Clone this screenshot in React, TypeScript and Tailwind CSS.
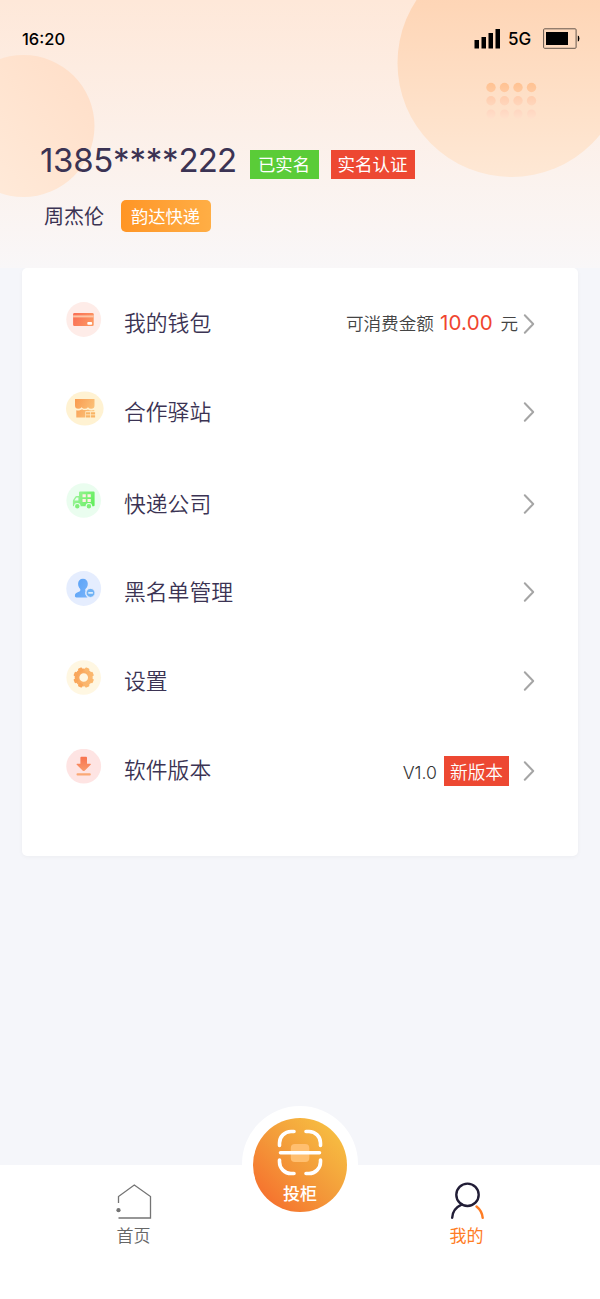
import type { ReactNode } from "react";

type MenuItem = {
  label: string;
  icon: ReactNode;
  spacing: string;
  chevron?: string;
  extra?: ReactNode;
};

function Gradient({ id, from, to }: { id: string; from: string; to: string }) {
  return (
    <defs>
      <linearGradient id={id} gradientUnits="userSpaceOnUse" x1="8" y1="12" x2="28" y2="22">
        <stop offset="0" stopColor={from} />
        <stop offset="1" stopColor={to} />
      </linearGradient>
    </defs>
  );
}

function WalletIcon() {
  return (
    <svg className="block h-[36px] w-[38px]" viewBox="0 0 38 36">
      <Gradient id="wallet" from="#fa7056" to="#fc9a63" />
      <circle cx="17.7" cy="17.5" r="17.4" fill="#feece8" />
      <rect x="7.1" y="11" width="20.6" height="13" rx="1.3" fill="url(#wallet)" />
      <rect x="7.1" y="13.4" width="20.6" height="2" fill="#fdc5a6" />
      <rect x="21.3" y="20" width="4.8" height="2.7" rx="0.9" fill="#fff" />
    </svg>
  );
}

function StoreIcon() {
  return (
    <svg className="block h-[36px] w-[38px]" viewBox="0 0 38 36">
      <Gradient id="store" from="#f99c51" to="#fbc57c" />
      <ellipse cx="18.8" cy="17.5" rx="18.8" ry="17.1" fill="#fff2d2" />
      <path
        d="M9 8h19.500v6.500q0 3.300-3.300 3.300-2 0-3.200-1.500-1.300 1.500-3.200 1.500t-3.200-1.500q-1.300 1.500-3.300 1.500Q9 17.800 9 14.500z"
        fill="url(#store)"
      />
      <path d="M10.300 19.200q1.800.7 3.500 0 1.600-.5 2.200-1 2.700 1.700 6 .2 2.300 1.600 6.300.6v1.200H19.400v6.300h-9.100z" fill="url(#store)" />
      <path d="M20 21.200h4.200v2.400H20zM24.900 21.200h4.200v2.400h-4.200zM20 24.200h4.200v2.300H20zM24.900 24.200h4.200v2.300h-4.200z" fill="#f9b465" />
    </svg>
  );
}

function TruckIcon() {
  return (
    <svg className="block h-[36px] w-[38px]" viewBox="0 0 38 36">
      <Gradient id="truck" from="#9df49b" to="#61ee5a" />
      <circle cx="17.7" cy="17.500" r="17.3" fill="#eafdef" />
      <path
        fillRule="evenodd"
        d="M14 8.500h13.600q1 0 1 1v12.800q0 1-1 1H7.700q-.8 0-.8-.8V18q0-.7.4-1.300l1.800-2.700q.6-.9 1.500-.9H13V9.500q0-1 1-1zM11 14.400q-.5 0-.8.4l-1.700 2.800h3.900v-3.200z"
        fill="url(#truck)"
      />
      <path d="M16.500 11.200h3.300v3h-3.300zM21.500 11.200h3.300v3h-3.300zM16.500 15.900h3.300v3h-3.300zM21.500 15.900h3.300v3h-3.300z" fill="#fff0e6" />
      <g fill="#80ef79" stroke="#eafdef" strokeWidth="1.100">
        <circle cx="11.300" cy="23.300" r="2.800" />
        <circle cx="22.900" cy="23.300" r="2.800" />
      </g>
    </svg>
  );
}

function BlockedUserIcon() {
  return (
    <svg className="block h-[36px] w-[38px]" viewBox="0 0 38 36">
      <Gradient id="user" from="#5aa2f6" to="#7cb6fb" />
      <circle cx="17.700" cy="17.500" r="17.400" fill="#e5edfe" />
      <path
        d="M17 7.700c-3 0-4.900 2-4.900 5.100 0 2.400.9 4.200 2.100 5.100.5 1.600-.1 2.400-1.900 3.100-2.500.9-3.400 1.800-3.400 4.100 0 .9.500 1.300 1.500 1.300h11.100a5.800 5.800 0 0 1-1.900-6.400c-.5-.6-.5-1.400-.1-2.100 1.400-1 2.300-2.800 2.300-5.100 0-3.100-1.800-5.100-4.800-5.100z"
        fill="url(#user)"
      />
      <circle cx="24.500" cy="21.900" r="4.500" fill="#71b3f5" stroke="#e5edfe" strokeWidth="1" />
      <path d="M22.300 21.900h4.600" stroke="#fff" strokeWidth="1.300" />
    </svg>
  );
}

function GearIcon() {
  return (
    <svg className="block h-[36px] w-[38px]" viewBox="0 0 38 36">
      <Gradient id="gear" from="#f9a156" to="#fbc07a" />
      <circle cx="17.700" cy="17.500" r="17.300" fill="#fff7e2" />
      <circle cx="17.700" cy="17.500" r="6.700" fill="none" stroke="url(#gear)" strokeWidth="4.700" />
      {[22.5, 67.5, 112.5, 157.5, 202.5, 247.5, 292.5, 337.5].map((angle) => (
        <rect key={angle} x="15.500" y="7.200" width="4.400" height="4" rx="1" fill={angle < 180 ? "#fbb76d" : "#f9a75b"} transform={`rotate(${angle} 17.7 17.5)`} />
      ))}
    </svg>
  );
}

function DownloadIcon() {
  return (
    <svg className="block h-[36px] w-[38px]" viewBox="0 0 38 36">
      <defs>
        <linearGradient id="download" x1="0" y1="0" x2="0" y2="1">
          <stop offset="0" stopColor="#f8734f" />
          <stop offset="1" stopColor="#f99a6b" />
        </linearGradient>
      </defs>
      <circle cx="17.700" cy="17.200" r="17.400" fill="#fee4e3" />
      <path
        d="M15.300 7.800h4.800q.9 0 .9.900v6h3.200q1.300 0 .4 1l-6 6q-.9.800-1.800 0l-6-6q-.9-1 .4-1h3.200V8.700q0-.9.900-.9z"
        fill="url(#download)"
      />
      <rect x="10.500" y="24.200" width="14.300" height="2.200" rx="1" fill="#faa875" />
    </svg>
  );
}

function Chevron({ className = "" }: { className?: string }) {
  return (
    <svg className={`${className} block h-[22px] w-[12px]`} viewBox="0 0 12 22" fill="none" stroke="#a5a5a5" strokeWidth="2" strokeLinecap="round" strokeLinejoin="round">
      <path d="M1.800 2.200 10.200 11 1.800 19.800" />
    </svg>
  );
}

function StatusBar() {
  return (
    <div className="flex h-[78px] items-center justify-between pr-[20px] pl-[22px] text-black">
      <span className="font-[Inter] text-[16.500px] font-medium">16:20</span>
      <div className="flex items-center">
        <svg className="h-[22px] w-[28px]" viewBox="0 0 28 22">
          <path d="M.5 12h4.500v8.500H.5zM7.500 9H12v11.500H7.500zM14.500 5H19v15.500h-4.500zM21.500 1H26v19.500h-4.500z" />
        </svg>
        <span className="ml-[6px] w-[35px] font-[Inter] text-[17px] font-medium">5G</span>
        <svg className="h-[22px] w-[37px]" viewBox="0 0 37 22">
          <rect x=".6" y=".8" width="32.500" height="19.500" rx="1" fill="none" stroke="#66584d" />
          <rect x="3" y="4" width="22" height="13" />
          <path d="M34.800 7.500q1.600.2 1.600 3t-1.600 3z" />
        </svg>
      </div>
    </div>
  );
}

function HeaderArt() {
  return (
    <svg className="absolute inset-0 h-[268px] w-[600px]" viewBox="0 0 600 268">
      <defs>
        <linearGradient id="big" x1="0" y1="0" x2="0" y2="1">
          <stop offset="0" stopColor="#fed1b0" />
          <stop offset="0.250" stopColor="#fed6b7" />
          <stop offset="1" stopColor="#fee8d5" />
        </linearGradient>
        <linearGradient id="small" x1="1" y1="0.200" x2="0.200" y2="0.900">
          <stop offset="0" stopColor="#ffdfc9" />
          <stop offset="1" stopColor="#ffead9" />
        </linearGradient>
        <linearGradient id="dotRow1" x1="0" y1="0" x2="0" y2="1">
          <stop offset="0" stopColor="#ffc292" />
          <stop offset="1" stopColor="#ffc9a0" />
        </linearGradient>
        <linearGradient id="dotRow2" x1="0" y1="0" x2="0" y2="1">
          <stop offset="0" stopColor="#ffcdae" />
          <stop offset="1" stopColor="#ffd6bc" />
        </linearGradient>
        <linearGradient id="dotRow3" x1="0" y1="0" x2="0" y2="1">
          <stop offset="0" stopColor="#ffd6c0" />
          <stop offset="1" stopColor="#ffe0cb" />
        </linearGradient>
      </defs>
      <circle cx="23.500" cy="126" r="71" fill="url(#small)" />
      <circle cx="511.500" cy="63" r="114" fill="url(#big)" />
      {[491, 504.500, 518, 531.500].map((x) => (
        <g key={x}>
          <circle cx={x} cy="87.500" r="4.700" fill="url(#dotRow1)" />
          <circle cx={x} cy="100.800" r="4.700" fill="url(#dotRow2)" />
          <circle cx={x} cy="114" r="4.500" fill="url(#dotRow3)" />
        </g>
      ))}
    </svg>
  );
}

const menu: MenuItem[] = [
  {
    label: "我的钱包",
    icon: <WalletIcon />,
    spacing: "mt-[11px]",
    chevron: "mt-[2px]",
    extra: (
      <div className="flex items-center pr-[5px] text-[17.600px] font-[350] text-[#444]">
        <span>可消费金额</span>
        <span className="mx-[6px] w-[54.500px] font-[Inter] text-[20.500px] font-normal tracking-[0.200px] text-[#f0452f]">10.00</span>
        <span>元</span>
      </div>
    ),
  },
  { label: "合作驿站", icon: <StoreIcon />, spacing: "mt-[1px]" },
  { label: "快递公司", icon: <TruckIcon />, spacing: "mt-[4px]" },
  { label: "黑名单管理", icon: <BlockedUserIcon />, spacing: "mt-0" },
  { label: "设置", icon: <GearIcon />, spacing: "mt-[1px]" },
  {
    label: "软件版本",
    icon: <DownloadIcon />,
    spacing: "mt-[1px]",
    chevron: "mt-[2px]",
    extra: (
      <div className="flex items-center pt-[2px] pr-[14px]">
        <span className="mt-[3px] mr-[7px] font-[Inter] text-[17.700px] font-light text-[#333]">V1.0</span>
        <span className="flex h-[30px] w-[65px] items-center justify-center bg-[#ed4832] pt-px text-[17.700px] font-[350] text-white">新版本</span>
      </div>
    ),
  },
];

export default function App() {
  return (
    <div className="flex h-[1299px] w-[600px] flex-col overflow-hidden bg-[#f5f6fa] font-['Noto_Sans_CJK_SC',sans-serif] leading-none">
      <header className="relative h-[268px] bg-linear-to-b from-[#fee8d9] via-[#fcf0e9] to-[#f9f7f8]">
        <HeaderArt />
        <div className="relative">
          <StatusBar />
          <div className="mt-[64px] flex h-[38px] items-center pl-[40px]">
            <span className="flex w-[210px] items-center pb-[2px] font-[Inter] text-[33px] text-[#3b3353]">
              <span className="tracking-[-0.300px]">1385</span>
              <span className="mt-[1px] tracking-[-0.200px]">****</span>
              <span className="tracking-[-0.800px]">222</span>
            </span>
            <span className="mt-[6px] flex h-[29px] w-[69px] items-center justify-center bg-[#5acc38] pr-px text-[17.300px] text-white">已实名</span>
            <span className="mt-[6px] ml-[12px] flex h-[29px] w-[84px] items-center justify-center bg-[#ed4832] pr-px text-[17.500px] text-white">实名认证</span>
          </div>
          <div className="mt-[20px] flex h-[32px] items-center pl-[44px]">
            <span className="w-[77px] text-[20px] text-[#3b3353]">周杰伦</span>
            <span className="flex h-[32px] w-[90px] items-center justify-center rounded-[5px] bg-linear-to-r from-[#ff9524] to-[#ffae45] pr-px text-[17.300px] text-white">
              韵达快递
            </span>
          </div>
        </div>
      </header>

      <main className="mx-[22px] flex h-[588px] flex-col rounded-[5px] bg-white pr-[43px] pl-[44px] shadow-[0_1px_4px_rgba(0,0,0,0.04)]">
        {menu.map((item) => (
          <div key={item.label} className={`${item.spacing} flex h-[88px] items-center`}>
            <div className="mr-[20px] mb-[7px]">{item.icon}</div>
            <span className="flex-1 pb-[3px] text-[21.800px] font-[350] text-[#3b3353]">{item.label}</span>
            {item.extra}
            <Chevron className={item.chevron} />
          </div>
        ))}
      </main>

      <footer className="relative mt-auto flex h-[134px] bg-white">
        <div className="flex w-[267px] flex-col items-center pt-[18px]">
          <svg className="h-[38px] w-[38px]" viewBox="0 0 38 38" fill="none" stroke="#747474" strokeWidth="1.300">
            <path d="M3.500 20v-6.500L19.300 2l16.200 11.500V35h-32" />
            <circle cx="3.500" cy="27.200" r="2.100" fill="#747474" stroke="none" />
          </svg>
          <span className="mt-[5px] text-[17px] font-[350] text-[#666]">首页</span>
        </div>
        <div className="flex-1" />
        <div className="flex w-[267px] flex-col items-center pt-[16px]">
          <svg className="h-[40px] w-[38px]" viewBox="0 0 38 40" fill="none" strokeWidth="2.400" strokeLinecap="round">
            <circle cx="19.500" cy="13.800" r="11.200" stroke="#211d36" />
            <path d="M13.500 23.600Q4.500 27.800 4.200 36.800" stroke="#211d36" />
            <path d="M28.500 25.500Q34 29.800 34.700 36.800" stroke="#ff7c24" />
          </svg>
          <span className="mt-[5px] text-[17px] text-[#ff7c24]">我的</span>
        </div>
        <div className="absolute -top-[59px] left-[242px] flex h-[117px] w-[116px] items-center justify-center rounded-full bg-white">
          <div className="flex h-[94px] w-[94px] flex-col items-center rounded-full bg-linear-to-tr from-[#f5622a] via-[#f39b3a] to-[#f7c844] pt-[10px]">
            <svg className="h-[50px] w-[50px]" viewBox="0 0 50 50" fill="none" stroke="#fff" strokeWidth="3.600" strokeLinecap="round">
              <rect x="15.800" y="16" width="18.500" height="18" rx="4" fill="#ffbf70" stroke="none" />
              <path d="M4.500 17.500V15A11.500 11.500 0 0 1 16 3.500h3M31 3.500h3A11.500 11.500 0 0 1 45.500 15v2.500M45.500 32v2A11.500 11.500 0 0 1 34 45.500h-3M19 45.500h-3A11.500 11.500 0 0 1 4.500 34v-2M5.500 24.800h39" />
            </svg>
            <span className="mt-[6px] text-[17px] font-medium text-white">投柜</span>
          </div>
        </div>
      </footer>
    </div>
  );
}
